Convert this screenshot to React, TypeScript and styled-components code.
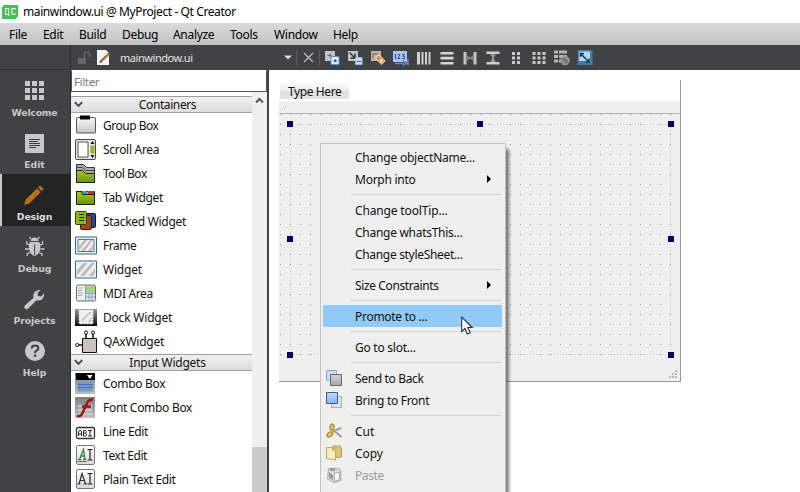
import React from "react";
import styled, { createGlobalStyle, css } from "styled-components";

const Global = createGlobalStyle`
  * { box-sizing: border-box; }
  html, body { margin: 0; padding: 0; }
  body { font-family: "Noto Sans", "Open Sans", sans-serif; font-size: 12px; color: #111; background: #fff; overflow: hidden; }
  svg { display: block; flex: none; }
`;

const Window = styled.div`
  width: 800px;
  height: 492px;
  display: flex;
  flex-direction: column;
  overflow: hidden;
  background: #fff;
`;
const TitleBar = styled.header`
  height: 23px;
  flex: none;
  display: flex;
  align-items: center;
  gap: 5px;
  padding-left: 2px;
  font-size: 12px;
  letter-spacing: -0.4px;
  color: #000;
`;
const MenuBar = styled.nav`
  height: 22px;
  flex: none;
  display: flex;
  align-items: center;
  padding-left: 9px;
  background: linear-gradient(#dadada, #c3c3c3);
`;
const MenuTitle = styled.span<{ $w: number; $ls?: number }>`
  width: ${(p) => p.$w}px;
  flex: none;
  white-space: nowrap;
  letter-spacing: ${(p) => p.$ls ?? -0.3}px;
  color: #000;
`;
const Body = styled.div`
  flex: 1;
  min-height: 0;
  display: flex;
`;
const Sidebar = styled.aside`
  width: 71px;
  flex: none;
  background: #404244;
  border-right: 1px solid #2b2c2d;
`;
const SidebarTop = styled.div`
  height: 25px;
  border-bottom: 1px solid #313335;
`;
const Mode = styled.div<{ $active?: boolean }>`
  height: 52px;
  display: flex;
  flex-direction: column;
  align-items: center;
  padding: 9px 1px 0 0;
  gap: 3px;
  font: bold 9.3px/14px "DejaVu Sans", sans-serif;
  color: #c6c7c8;
  ${(p) =>
    p.$active &&
    css`
      background: #232424;
      color: #dcdcdc;
      box-shadow: inset 2px 0 #c9c9c9;
    `}
`;
const ModeLabel = styled.span<{ $ls: number }>`
  letter-spacing: ${(p) => p.$ls}px;
`;
const Main = styled.div`
  flex: 1;
  min-width: 0;
  display: flex;
  flex-direction: column;
`;
const Toolbar = styled.div`
  height: 25px;
  flex: none;
  background: #404244;
  display: flex;
  align-items: center;
  padding-left: 5px;
`;
const FileName = styled.span`
  width: 165px;
  color: #e4e4e4;
  font-size: 11px;
  letter-spacing: -0.45px;
  padding-left: 6px;
`;
const ToolDivider = styled.i`
  width: 1px;
  height: 15px;
  background: #5b5d5f;
`;
const ToolCell = styled.span<{ $w?: number }>`
  width: ${(p) => p.$w ?? 23}px;
  display: flex;
  justify-content: center;
`;
const Work = styled.div`
  flex: 1;
  min-height: 0;
  display: flex;
`;
const Panel = styled.section`
  width: 198px;
  flex: none;
  display: flex;
  flex-direction: column;
  border-right: 2px solid #404244;
`;
const Filter = styled.div`
  height: 22px;
  flex: none;
  border: 1px solid #555;
  border-top-color: #fff;
  padding-left: 2px;
  line-height: 22px;
  font-size: 11.5px;
  letter-spacing: -0.35px;
  color: #7a7a7a;
`;
const PanelBody = styled.div`
  flex: 1;
  min-height: 0;
  display: flex;
`;
const List = styled.div`
  width: 181px;
  flex: none;
  padding-top: 4px;
  overflow: hidden;
`;
const Category = styled.div`
  height: 17px;
  display: flex;
  align-items: center;
  border-top: 1px solid #9d9d9d;
  border-bottom: 1px solid #a2a2a2;
  background: linear-gradient(#f1f1f1, #dcdcdc);
  padding-left: 3px;
  &:not(:first-child) {
    margin-top: 1px;
  }
`;
const CategoryName = styled.span<{ $ls?: number }>`
  flex: 1;
  text-align: center;
  line-height: 15px;
  letter-spacing: ${(p) => p.$ls ?? 0}px;
`;
const WidgetRow = styled.div<{ $ls?: number }>`
  height: 24px;
  display: flex;
  align-items: center;
  gap: 6px;
  padding-left: 4px;
  white-space: nowrap;
  letter-spacing: ${(p) => p.$ls ?? 0}px;
`;
const ScrollBar = styled.div`
  width: 15px;
  background: #efefef;
  display: flex;
  flex-direction: column;
  justify-content: space-between;
  align-items: center;
  padding-top: 5px;
`;
const Thumb = styled.div`
  width: 15px;
  height: 45px;
  background: #cbcbcb;
`;
const Canvas = styled.main`
  flex: 1;
  position: relative;
  background: #fff;
  padding: 10px 0 0 10px;
`;
const Form = styled.div`
  width: 402px;
  height: 302px;
  position: relative;
  border-right: 1px solid #999;
  border-bottom: 1px solid #999;
  background: #efefef;
`;
const FormMenu = styled.div`
  height: 22px;
  background: #fff;
  border-bottom: 1px solid #f3f3f3;
  padding: 2px 0 0 1px;
`;
const TypeHere = styled.div`
  width: 69px;
  height: 17px;
  padding-left: 8px;
  line-height: 19px;
  letter-spacing: -0.4px;
  background: linear-gradient(#fff, #ededed 50%, #dedede 51%, #e6e6e6);
`;
const FormToolbar = styled.div`
  height: 12px;
  background: #efefef;
  border-bottom: 1px solid #b2b2b2;
  padding: 4px 0 0 5px;
`;
const Drawing = styled.svg<{ $x: number; $y: number }>`
  position: absolute;
  left: ${(p) => p.$x}px;
  top: ${(p) => p.$y}px;
`;
const ContextMenu = styled.div`
  position: absolute;
  left: 51px;
  top: 73px;
  width: 186px;
  height: 380px;
  padding: 2px 2px;
  background: #efefef;
  border: 1px solid #c3c3c3;
  box-shadow: 4px 5px 3px -1px rgba(0, 0, 0, 0.5);
`;
const MenuItem = styled.div<{ $hot?: boolean; $off?: boolean; $ls?: number }>`
  height: 22px;
  display: flex;
  align-items: center;
  padding-right: 11px;
  margin-right: 1px;
  white-space: nowrap;
  letter-spacing: ${(p) => p.$ls ?? 0}px;
  color: ${(p) => (p.$off ? "#9c9c9c" : "#111")};
  background: ${(p) => (p.$hot ? "#91c9f7" : "transparent")};
`;
const IconSlot = styled.span`
  width: 32px;
  padding-left: 3px;
  flex: none;
`;
const ItemText = styled.span`
  flex: 1;
`;
const Separator = styled.hr`
  border: 0;
  height: 1px;
  margin: 4px 2px 4px 28px;
  background: #d2d2d2;
`;

const I = ({ w = 16, h = 16, children }: { w?: number; h?: number; children: React.ReactNode }) => (
  <svg width={w} height={h} viewBox={`0 0 ${w} ${h}`}>
    {children}
  </svg>
);

const QtLogo = () => (
  <I w={16} h={14}>
    <path d="M2 0H16V11.500L13.500 14H0V2Z" fill="#3fbf55" />
    <path d="M3.500 3.500h3v6h-3zM6 9l1.500 2" fill="none" stroke="#e8f8ea" strokeWidth="1.200" />
    <path d="M13 5V3.500h-3v6h3V8" fill="none" stroke="#e8f8ea" strokeWidth="1.200" />
  </I>
);

const modes: [string, number, React.ReactNode, boolean?][] = [
  ["Welcome", -0.2, <g fill="#c7c8c9">{[2, 9, 16].map((y) => [2, 9, 16].map((x) => <rect key={`${x}-${y}`} x={x} y={y} width="5" height="5" />))}</g>],
  ["Edit", 0, <g><path fill="#c7c8c9" d="M2 3h19v19H2z" /><path stroke="#3a3c3e" d="M6 8.500h11M6 10.500h9M6 12.500h11M6 14.500h11M6 16.500h7" /></g>],
  ["Design", -0.1, <g fill="#bd6f1d"><path d="M1 22 2.800 16.500 14 5.500 17.800 9 6.500 20.200ZM15 4.500 17 2.500 20.800 6 18.800 8Z" /></g>, true],
  ["Debug", -0.1, <g><path d="M7.500 6Q8 2.500 11.500 2.500T15.500 6ZM6.700 7h9.800Q18 10 17.300 14.500 15.500 20 11.600 21 7.500 20 6 14.500 5.300 10 6.700 7Z" fill="#c7c8c9" /><path d="M8 4 6.500 1.800M15 4 16.500 1.800M6.500 10 3.800 9V6M6 14H2M7 17.500 4.200 19v2M16.800 10l2.700-1V6M17.500 14h4M16 17.500l3 1.500v2" fill="none" stroke="#c7c8c9" strokeWidth="1.300" /><path d="M11.600 9.500V20" stroke="#404244" /></g>],
  ["Projects", -0.1, <path d="M1.800 18.600 10.400 11Q9.700 7 12.200 4.600 14.400 2.500 17.600 3L14.500 6 15 9l3 .6L21 6.500Q21.600 9.500 19.400 11.900 17 14.200 13.400 13.200L5 21.700Q3.200 22.900 1.800 21.500 .7 20 1.800 18.600Z" fill="#c7c8c9" />],
  ["Help", -0.1, <g><circle cx="12" cy="12" r="10" fill="#c7c8c9" /><path d="M8.700 9.500Q8.700 6.500 12 6.500 15.400 6.500 15.300 9.200 15.300 10.700 13.500 11.700 12 12.600 12 14" fill="none" stroke="#404244" strokeWidth="2.100" /><rect x="10.900" y="15.500" width="2.300" height="2.300" fill="#404244" /></g>],
];

const sheetA = <path d="M1 1h10v10H1z" fill="#c4c4c4" />;
const tools: React.ReactNode[] = [
  <>{sheetA}<path d="M3.500 5.500h4M6 3.500v4" stroke="#666" /><path d="M7 6.500h8v8H7z" fill="#dfeafa" stroke="#5f8fcd" /><path d="M10 9.500h2.500V12H10z" fill="#1859af" /></>,
  <>{sheetA}<path d="m2.500 2.500 5 5M8 3.500V8H3.500" stroke="#26323c" fill="none" strokeWidth="1.400" /><path d="M8.500 7.500h6.500v7H8.500z" fill="#c7dcf6" stroke="#9bbbe4" /><path d="M9.500 11.500h4.500" stroke="#356dad" /></>,
  <><path d="M1 1h10v10H1z" fill="#b9b5b2" /><path d="M3 4h5M3 3.500v5" stroke="#a34a22" /><path d="m6 6.500 3.500-1.500 5.500 6-3.500 3.500-5.500-5.500z" fill="#ec8f50" stroke="#ffe1c4" /><path d="m11 9 2 2-1.500 1.500-2-2z" fill="#fff" /></>,
  <><path d="M0 1h14v11H0z" fill="#a9c4e8" /><path d="M1.500 5l1-1v5M4.500 4.500h2V6L4.500 8.500H7M9 4.500h2.500L10 6.300h1.500v2.200H9" stroke="#24589c" fill="none" /><path d="M2 13.500h9M15 9v6M10 10.500l3.500 2.500L10 15.500" stroke="#5b93d8" fill="none" strokeWidth="1.500" /></>,
  <path d="M1 2h3v12.500H1zM5.500 2h2v12.500h-2zM9 2h2v12.500H9zM12.500 2h2v12.500h-2z" fill="#d0d0cf" />,
  <path d="M1.500 2h13v2.500h-13zM1.500 6.700h13v2.800h-13zM1.500 12h13v2.500h-13z" fill="#d5d5d4" />,
  <><path d="M1.500 2h3v12.500h-3zM11.500 2h3v12.500h-3z" fill="#c5c5c4" /><path d="M5 5l3 3-3 3zM11 5 8 8l3 3z" fill="#858585" /><path d="M4.500 8h7" stroke="#858585" strokeWidth="2" /></>,
  <><path d="M1.500 1.500h13V4h-13zM1.500 12h13v2.500h-13z" fill="#d0d0cf" /><path d="M5 4.500h6L8 8zM5 11.500h6L8 8z" fill="#999" /><path d="M8 4v8" stroke="#999" strokeWidth="2" /></>,
  <path d="M4 2h3v3H4zM9 2h3v3H9zM4 6.500h3v3H4zM9 6.500h3v3H9zM4 11h3v3H4zM9 11h3v3H9z" fill="#c9c9c7" />,
  <path d="M1.500 2h3v3h-3zM6.500 2h3v3h-3zM11.500 2h3v3h-3zM1.500 6.500h3v3h-3zM6.500 6.500h3v3h-3zM11.500 6.500h3v3h-3zM1.500 11h3v3h-3zM6.500 11h3v3h-3zM11.500 11h3v3h-3z" fill="#c9c9c7" />,
  <><path d="M0 .5h4v3H0zM5 .5h8v3H5zM0 5h4v3H0zM5 5h8v3H5zM0 9.500h4v3H0zM5 9.500h3v3H5z" fill="#b5b5b4" /><circle cx="11" cy="10.500" r="4.300" fill="#8b8b8b" stroke="#a0a0a0" /><path d="m8.500 8 5 5" stroke="#666" strokeWidth="1.300" /></>,
  <><path d="M.5 0h15v15H.5z" fill="#3f7aaa" /><path d="M2 1.500h11v9.500H2z" fill="#bad5e4" /><path d="m3.500 3.500 8.500 8.500M3.500 7V3.500H7M8.500 12H12V8.500" fill="none" stroke="#143c5d" strokeWidth="1.500" /></>,
];

const Stripes = ({ x, y, w, h }: { x: number; y: number; w: number; h: number }) => (
  <>
    <path d={`M${x} ${y}h${w}v${h}h-${w}z`} fill="#f0f0f0" />
    <path
      d={`M${x} ${y + h * 0.55}L${x + w * 0.35} ${y}h${w * 0.25}L${x} ${y + h * 0.95}zM${x + w * 0.15} ${y + h}L${x + w * 0.8} ${y}H${x + w}L${x + w * 0.4} ${y + h}zM${x + w * 0.65} ${y + h}L${x + w} ${y + h * 0.4}V${y + h * 0.8}L${x + w * 0.88} ${y + h}z`}
      fill="#bdbdbd"
    />
  </>
);

const frameIcon = <><path d="M.5 3h21v17H.5z" fill="#e9f3fa" stroke="#386784" /><path d="M3 5.500h16v12H3z" fill="#f3f3f3" stroke="#50789d" /><Stripes x={4} y={6} w={14} h={11} /></>;
const containers: [string, number, React.ReactNode][] = [
  ["Group Box", -0.5, <><path d="M2.500 3.500h17q1 0 1 1.500v13q0 1-1 1h-17q-1 0-1-1V5q0-1.500 1-1.500z" fill="url(#silver)" stroke="#555" /><path d="M5 1.500h10v4H5z" fill="#080808" /></>],
  ["Scroll Area", -0.3, <><rect x=".5" y="1.500" width="20" height="20" rx="1.500" fill="#e3e3df" stroke="#4b4b49" /><path d="M3 4h10v15H3z" fill="#fff" stroke="#565656" /><path d="M15.500 7.500h4v8h-4z" fill="#91b625" /><path d="M15.500 6 17.500 3l2 3zM15.500 17l2 3 2-3z" fill="#111" /></>],
  ["Tool Box", -0.5, <><path d="M1.500 2.500h7l3 3h8v15h-18z" fill="#aaa" stroke="#333" /><path d="M1.500 5.500h6l3 3h9" fill="none" stroke="#444" /><path d="M1.500 8.500h6l3 3h9v9h-18z" fill="url(#lime)" stroke="#182500" /></>],
  ["Tab Widget", -0.3, <><path d="M1.500 5.500h18v13h-18z" fill="url(#lime)" stroke="#17230a" /><path d="M7 5h5v3H7z" fill="#2da1d9" /><path d="M13 5h6v3h-6z" fill="#cf2c1e" /><path d="M1 5.500h5.500l1 3h12" fill="none" stroke="#17230a" /></>],
  ["Stacked Widget", -0.3, <><rect x="9.500" y="3.500" width="11" height="14" rx="1" fill="#234d9c" stroke="#101936" /><rect x="5.500" y="5.500" width="11" height="14" rx="1" fill="#a04521" stroke="#421b0c" /><rect x=".5" y="1.500" width="11" height="13" rx="1" fill="#8eb71a" stroke="#304406" /><path d="M4 4.500h5M4 7.500h5M4 10.500h5" stroke="#203001" /></>],
  ["Frame", -0.5, frameIcon],
  ["Widget", -0.2, <><path d="M.5 3h21v17H.5z" fill="#e9f3fa" stroke="#386784" /><Stripes x={2} y={5} w={18} h={13} /></>],
  ["MDI Area", -0.35, <><rect x="1.500" y="3" width="19" height="16" rx="1.500" fill="#eee" stroke="#6a6a6a" /><path d="M10 4h10v7H10z" fill="#acd082" /><path d="M10.500 12h9v6h-9z" fill="#d4e8fb" /><path d="M10.500 3v16M10 11.500h10M10 15h10M14 12v7M17 12v7" stroke="#7396b4" strokeWidth=".8" /><path d="M3 6h5M3 8.500h4M3 11h5M3 13.500h4" stroke="#aaa" /></>],
  ["Dock Widget", -0.2, <><path d="M0 3h22v17H0z" fill="url(#dark)" /><path d="M4.500 4.500h13v13h-13z" fill="#f7f7f7" stroke="#fff" strokeWidth="1.600" strokeDasharray="2 1" /><path d="M5 5.500h12v11H5z" fill="#f0f0f0" /><path d="M6 14l8-8h3L7 16zM12 16l5-5v3l-2 2z" fill="#c8c8c8" /></>],
  ["QAxWidget", -0.25, <><path d="M7.500 8.500h14v14h-14z" fill="#c8c3bb" stroke="#111" /><path d="M11 4v4M18 4v4M4 15h4" stroke="#111" strokeWidth="1.500" /><circle cx="11" cy="2.500" r="1.600" fill="none" stroke="#111" /><circle cx="18" cy="2.500" r="1.600" fill="none" stroke="#111" /><circle cx="2.300" cy="15" r="1.600" fill="none" stroke="#111" /></>],
];
const inputs: [string, number, React.ReactNode][] = [
  ["Combo Box", -0.3, <><path d="M0 1h20v21H0z" fill="url(#dust)" /><path d="M1 1h19v7H1z" fill="#050505" /><path d="m12 3 2.800 4L17.500 3z" fill="#fff" /><path d="M2.500 9.500h15v10h-15z" fill="#6f9cd0" /><path d="M3 12.500h15M3 15.500h15" stroke="#4a73a8" /></>],
  ["Font Combo Box", -0.3, <><path d="M0 1h20v21H0z" fill="url(#dust)" /><path d="M3 10h14M3 14h14M3 18h14" stroke="#ccc" strokeWidth="2" /><path d="M2 20q4 1 6-4l4-9q2-4 6-3.500M7 10.500h9" fill="none" stroke="#98161a" strokeWidth="2.400" /></>],
  ["Line Edit", -0.35, <><rect x="1.500" y="7.500" width="18" height="11" rx="1.500" fill="#f8f8f8" stroke="#333" strokeWidth="1.300" /><path d="M3.500 16v-4l1-1.500h1l1 1.500v4M3.500 14h3M8.500 16v-5.500h2l.8.8v1.200l-.8.700 1 1v1.200l-.8.600H8.500M8.500 13h2M13 10.500h4M15 10.500v5.500M13 16h4" fill="none" stroke="#111" strokeWidth=".9" /></>],
  ["Text Edit", -0.4, <><rect x="1.500" y="1.500" width="18" height="19" rx="1.500" fill="url(#paper)" stroke="#777" /><path d="M3 15.500h3M8 15.500h3M4.500 15.500 8.500 5.500l1.500 10M6 12h4" fill="none" stroke="#30854b" strokeWidth="1.300" /><path d="M2.500 17.500h9" stroke="#30854b" /><path d="M12.500 5.500h5M15 5.500v10.500M12.500 16h5" stroke="#222" strokeWidth="1.200" /></>],
  ["Plain Text Edit", -0.4, <><rect x="1.500" y="1.500" width="18" height="19" rx="1.500" fill="url(#paper)" stroke="#777" /><path d="M2.500 16h3M8.500 16h3.500M4 16 7 5.500 10.500 16M5 12.500h4.500" fill="none" stroke="#333" strokeWidth="1.200" /><path d="M12.500 5.500h5M15 5.500v10.500M12.500 16h5" stroke="#222" strokeWidth="1.200" /></>],
];

const backIcon = <I><path d="M.5.5h10v10H.5z" fill="#c9ddf6" stroke="#8ba9cc" /><path d="M4.500 4.500h11v11h-11z" fill="url(#grey)" stroke="#666" /></I>;
const frontIcon = <I><path d="M5.500 4.500h10v11h-10z" fill="#e2e2e2" stroke="#aaa" /><path d="M.5.500h11v11H.5z" fill="url(#sky)" stroke="#435f86" /></I>;
const cutIcon = <I><path d="M6 8.500 15.500 5M7 7l8.500 7" stroke="#a3a39b" strokeWidth="2.200" /><ellipse cx="6" cy="4" rx="1.800" ry="3" fill="#ead28a" stroke="#b8922b" strokeWidth="1.700" transform="rotate(10 6 4)" /><ellipse cx="3.800" cy="11.500" rx="3" ry="2" fill="#ead28a" stroke="#b8922b" strokeWidth="1.700" transform="rotate(-35 3.800 11.500)" /></I>;
const copyIcon = <I><path d="M7 1h7l1.500 2v9L7 13z" fill="#dcc477" stroke="#b59c58" /><path d="M.5 2.500h6L9.500 5v10l-9-1.500z" fill="#f9edb9" stroke="#bfa968" /><path d="M6.500 2.500V5h3" fill="none" stroke="#b59e5b" /></I>;
const pasteIcon = <I><path d="M2.500 1.500h10l2.500 2v10l-7 2L1.500 12z" fill="#ddd" stroke="#aaa" /><path d="M4 1h5v3H4zM3 5v6l4 2V8z" fill="#999" /><path d="M8.500 5.500h5v7l-5 2z" fill="#f5f5f5" stroke="#aaa" /></I>;
const arrow = <svg width="4" height="8" viewBox="0 0 4 8"><path d="M0 0 4 4 0 8Z" fill="#000" /></svg>;
const Chevron = () => <svg width="9" height="7" viewBox="0 0 9 7"><path d="m.8 1.200 3.700 3.700 3.700-3.700" fill="none" stroke="#444" strokeWidth="1.800" /></svg>;

type Entry = { t: string; ls?: number; sub?: boolean; hot?: boolean; off?: boolean; icon?: React.ReactNode } | null;
const entries: Entry[] = [
  { t: "Change objectName...", ls: -0.22 }, { t: "Morph into", ls: -0.25, sub: true }, null,
  { t: "Change toolTip...", ls: -0.15 }, { t: "Change whatsThis...", ls: -0.28 }, { t: "Change styleSheet...", ls: -0.32 }, null,
  { t: "Size Constraints", ls: -0.38, sub: true }, null,
  { t: "Promote to ...", ls: -0.28, hot: true }, null,
  { t: "Go to slot...", ls: -0.25 }, null,
  { t: "Send to Back", ls: -0.35, icon: backIcon }, { t: "Bring to Front", ls: -0.3, icon: frontIcon }, null,
  { t: "Cut", icon: cutIcon }, { t: "Copy", ls: -0.1, icon: copyIcon }, { t: "Paste", ls: -0.4, icon: pasteIcon, off: true },
];

const Gradients = () => (
  <Drawing $x={0} $y={0} width="0" height="0">
    <defs>
      {[
        ["silver", "#fafafa", "#c4c4c4"], ["lime", "#a3cc24", "#6d920d"], ["dark", "#9098a0", "#080b0f"],
        ["dust", "#7f7f7f", "#c1c1bf"], ["paper", "#ffffff", "#d8d8d8"], ["grey", "#d4d4d4", "#a8a8a8"], ["sky", "#c0d9fa", "#86b3ee"],
      ].map(([id, a, b]) => (
        <linearGradient key={id} id={id} x1="0" y1="0" x2="0" y2="1"><stop stopColor={a} /><stop offset="1" stopColor={b} /></linearGradient>
      ))}
    </defs>
  </Drawing>
);

const menus: [string, number][] = [["File", 34], ["Edit", 36], ["Build", 43], ["Debug", 51], ["Analyze", 57], ["Tools", 44], ["Window", 59], ["Help", 40]];
const handles = [[8, 41], [198, 41], [389, 41], [8, 156], [389, 156], [8, 272], [198, 272], [389, 272]];

export default function App() {
  return (
    <Window>
      <Global />
      <Gradients />
      <TitleBar><QtLogo />mainwindow.ui @ MyProject - Qt Creator</TitleBar>
      <MenuBar>
        {menus.map(([t, w]) => <MenuTitle key={t} $w={w}>{t}</MenuTitle>)}
      </MenuBar>
      <Body>
        <Sidebar>
          <SidebarTop />
          {modes.map(([t, ls, icon, active]) => (
            <Mode key={t} $active={active}><I w={23} h={24}>{icon}</I><ModeLabel $ls={ls}>{t}</ModeLabel></Mode>
          ))}
        </Sidebar>
        <Main>
          <Toolbar>
            <ToolCell $w={15}><I w={14} h={16}><path d="M1 8h8v6H1z" fill="#646668" /><path d="M7.500 8V4.500Q7.500 2 10 2t2.500 2.500V7" fill="none" stroke="#646668" strokeWidth="1.500" /></I></ToolCell>
            <ToolCell $w={23}><I w={16} h={17}><path d="M2 1h9l3 3v12H2z" fill="#f4f4f2" /><path d="m4.500 14 1-3 8-7.500 1.500 1.800-8 7.700z" fill="#a9713a" /><path d="m4.500 14 1-2.500 1.500 1.500z" fill="#333" /></I></ToolCell>
            <FileName>mainwindow.ui</FileName>
            <ToolCell $w={17}><svg width="8" height="5" viewBox="0 0 8 5"><path d="M0 .5h8L4 4.500z" fill="#ddd" /></svg></ToolCell>
            <ToolDivider />
            <ToolCell $w={22}><svg width="11" height="11" viewBox="0 0 11 11"><path d="m1 1 9 9M10 1l-9 9" stroke="#bdbdbd" strokeWidth="1.200" /></svg></ToolCell>
            <ToolDivider />
            {tools.map((t, i) => <ToolCell key={i}><I>{t}</I></ToolCell>)}
          </Toolbar>
          <Work>
            <Panel>
              <Filter>Filter</Filter>
              <PanelBody>
                <List>
                  <Category><Chevron /><CategoryName $ls={-0.4}>Containers</CategoryName></Category>
                  {containers.map(([t, ls, icon]) => <WidgetRow key={t} $ls={ls}><I w={22} h={23}>{icon}</I>{t}</WidgetRow>)}
                  <Category><Chevron /><CategoryName $ls={-0.25}>Input Widgets</CategoryName></Category>
                  {inputs.map(([t, ls, icon]) => <WidgetRow key={t} $ls={ls}><I w={22} h={23}>{icon}</I>{t}</WidgetRow>)}
                </List>
                <ScrollBar>
                  <svg width="9" height="7" viewBox="0 0 9 7"><path d="M1 5.500 4.500 2 8 5.500" fill="none" stroke="#555" strokeWidth="2" /></svg>
                  <Thumb />
                </ScrollBar>
              </PanelBody>
            </Panel>
            <Canvas>
              <Form>
                <FormMenu><TypeHere>Type Here</TypeHere></FormMenu>
                <FormToolbar><svg width="3" height="3" viewBox="0 0 3 3"><path d="M0 2h1v1H0zM1 0h1v1H1z" fill="#aaa" /></svg></FormToolbar>
                <Drawing $x={0} $y={34} width="401" height="266" viewBox="0 0 401 266">
                  <defs><pattern id="dots" width="10" height="10" patternUnits="userSpaceOnUse"><rect x="1" width="1" height="1" fill="#969696" /></pattern></defs>
                  <rect width="401" height="248" fill="url(#dots)" />
                  <path d="M11.500 10V241M391.500 10V241M11 10.500H391M11 240.500H391" stroke="#c8c8c8" strokeDasharray="1 2" />
                  <path d="M397 257h2v2h-2zM394 260h2v2h-2zM397 260h2v2h-2zM391 263h2v2h-2zM394 263h2v2h-2zM397 263h2v2h-2z" transform="translate(-1 -1)" fill="#b9b9b9" />
                </Drawing>
                <Drawing $x={0} $y={0} width="401" height="301" viewBox="0 0 401 301">
                  {handles.map(([x, y]) => <rect key={`${x}-${y}`} x={x} y={y} width="6" height="6" fill="#00005f" />)}
                </Drawing>
              </Form>
              <ContextMenu>
                {entries.map((e, i) => e ? (
                  <MenuItem key={i} $hot={e.hot} $off={e.off} $ls={e.ls}>
                    <IconSlot>{e.icon}</IconSlot><ItemText>{e.t}</ItemText>{e.sub && arrow}
                  </MenuItem>
                ) : <Separator key={i} />)}
              </ContextMenu>
              <Drawing $x={192} $y={246} width="13" height="20" viewBox="0 0 13 20">
                <path d="M.7 1v14.500L4 12.500l2.300 5.500 2.900-1.200-2.400-5.300h4.500z" fill="#fff" stroke="#26324a" strokeWidth="1.100" />
              </Drawing>
            </Canvas>
          </Work>
        </Main>
      </Body>
    </Window>
  );
}
